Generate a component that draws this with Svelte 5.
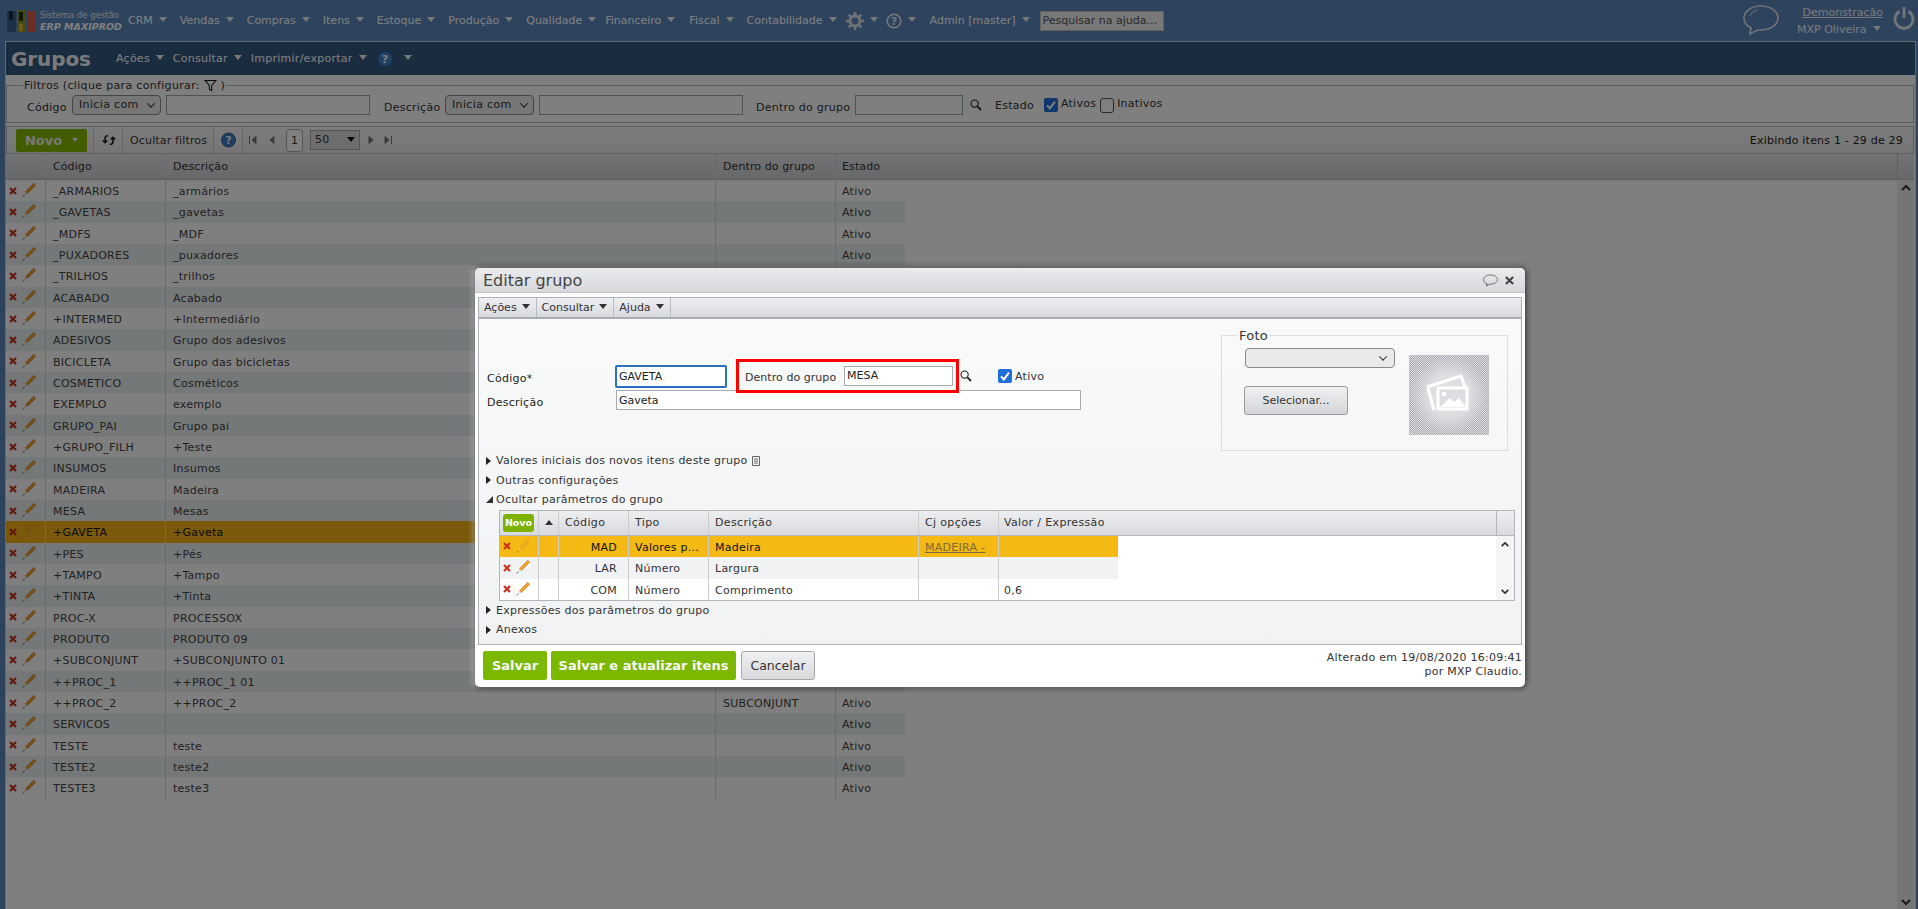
<script>
  const menu = ['CRM','Vendas','Compras','Itens','Estoque','Produção','Qualidade','Financeiro','Fiscal','Contabilidade'];
  const rows = [
    ['_ARMARIOS','_armários','','Ativo'],['_GAVETAS','_gavetas','','Ativo'],['_MDFS','_MDF','','Ativo'],['_PUXADORES','_puxadores','','Ativo'],
    ['_TRILHOS','_trilhos','','Ativo'],['ACABADO','Acabado','','Ativo'],['+INTERMED','+Intermediário','','Ativo'],['ADESIVOS','Grupo dos adesivos','','Ativo'],
    ['BICICLETA','Grupo das bicicletas','','Ativo'],['COSMETICO','Cosméticos','','Ativo'],['EXEMPLO','exemplo','','Ativo'],['GRUPO_PAI','Grupo pai','','Ativo'],
    ['+GRUPO_FILH','+Teste','','Ativo'],['INSUMOS','Insumos','','Ativo'],['MADEIRA','Madeira','','Ativo'],['MESA','Mesas','','Ativo'],
    ['+GAVETA','+Gaveta','','Ativo'],['+PES','+Pés','','Ativo'],['+TAMPO','+Tampo','','Ativo'],['+TINTA','+Tinta','','Ativo'],
    ['PROC-X','PROCESSOX','','Ativo'],['PRODUTO','PRODUTO 09','','Ativo'],['+SUBCONJUNT','+SUBCONJUNTO 01','','Ativo'],['++PROC_1','++PROC_1 01','','Ativo'],
    ['++PROC_2','++PROC_2','SUBCONJUNT','Ativo'],['SERVICOS','','','Ativo'],['TESTE','teste','','Ativo'],['TESTE2','teste2','','Ativo'],['TESTE3','teste3','','Ativo']
  ];
  const params = [
    ['MAD','Valores p...','Madeira','MADEIRA -',''],
    ['LAR','Número','Largura','',''],
    ['COM','Número','Comprimento','','0,6']
  ];
</script>

{#snippet caret()}<i class="caret"></i>{/snippet}
{#snippet xmark()}
  <svg class="xm" viewBox="0 0 8 8" width="8" height="8"><path d="M1 1 7 7M7 1 1 7" stroke="#c8321e" stroke-width="2.2"/></svg>
{/snippet}
{#snippet pencil(faded)}
  <svg class="pen" class:faded viewBox="0 0 14 14" width="15" height="15"><path d="M3.2 9 11 1.2 12.8 3 5 10.8Z" fill="#f0a22c" stroke="#c67a14" stroke-width=".6"/><path d="M3.2 9 2.4 11.6 5 10.8Z" fill="#f3d9a5"/><path d="M0.5 13.4 2.6 12" stroke="#444" stroke-width=".7"/></svg>
{/snippet}
{#snippet help(size)}
  <svg viewBox="0 0 16 16" width={size} height={size}><circle cx="8" cy="8" r="7.5" fill="#3f7fc4" stroke="#2a5f9c"/><text x="8" y="12" text-anchor="middle" font-size="11" font-weight="700" fill="#fff" font-family="DejaVu Sans">?</text></svg>
{/snippet}
{#snippet lens()}
  <svg viewBox="0 0 12 12" width="12" height="12"><circle cx="4.6" cy="4.6" r="3.6" fill="none" stroke="#222" stroke-width="1.1"/><path d="M7.4 7.4 11 11" stroke="#222" stroke-width="1.8"/></svg>
{/snippet}
{#snippet check()}
  <svg viewBox="0 0 14 14" width="14" height="14"><rect width="14" height="14" rx="2" fill="#1f6fd8"/><path d="M3 7.4 5.8 10.4 11 3.6" fill="none" stroke="#fff" stroke-width="2"/></svg>
{/snippet}
{#snippet tri(open)}
  <i class={open ? 'tri open' : 'tri'}></i>
{/snippet}

<div class="page">
  <header class="top">
    <svg class="logo" viewBox="0 0 30 24" width="30" height="24">
      <rect x="1" y="2" width="9" height="21" fill="#3a608a"/><rect x="11" y="1" width="8" height="22" fill="#8a9a2a"/><rect x="21" y="2" width="8" height="21" fill="#d85a4c"/>
      <rect x="3" y="2" width="4" height="9" fill="#1c2c40"/><rect x="13" y="3" width="4" height="9" fill="#222c10"/><rect x="13" y="15" width="4" height="7" fill="#e5b92f"/>
    </svg>
    <div class="brand"><span>Sistema de gestão</span><b>ERP MAXIPROD</b></div>
    <nav class="mainnav">
      {#each menu as m}<span class="mi">{m}{@render caret()}</span>{/each}
      <span class="mi ic">
        <svg viewBox="0 0 18 18" width="18" height="18"><circle cx="9" cy="9" r="5" fill="none" stroke="#e0e3e8" stroke-width="3"/><path d="M9 0v4M9 14v4M0 9h4M14 9h4M2.6 2.6l2.8 2.8M12.6 12.6l2.8 2.8M15.4 2.6l-2.8 2.8M5.4 12.6l-2.8 2.8" stroke="#e0e3e8" stroke-width="2.6"/></svg>
        {@render caret()}
      </span>
      <span class="mi ic">
        <svg viewBox="0 0 16 16" width="16" height="16"><circle cx="8" cy="8" r="6.8" fill="none" stroke="#f0f2f5" stroke-width="1.5"/><text x="8" y="11.8" text-anchor="middle" font-size="10.5" font-weight="700" fill="#f0f2f5" font-family="DejaVu Sans">?</text></svg>
        {@render caret()}
      </span>
      <span class="mi admin">Admin [master]{@render caret()}</span>
      <input class="search" placeholder="Pesquisar na ajuda..." />
    </nav>
    <div class="user">
      <svg class="bubble" viewBox="0 0 38 32" width="38" height="32"><path d="M19 2C9 2 2 7.500 2 14c0 4.500 3 8 7 10l-1 6 8-4.200c1 .2 2 .2 3 .2 10 0 17-5.500 17-12S29 2 19 2Z" fill="none" stroke="#dfe3e8" stroke-width="1.700"/><path d="M8 12c1-3 4-5 8-6" fill="none" stroke="#dfe3e8" stroke-width="1"/></svg>
      <div class="who"><u>Demonstração</u><span>MXP Oliveira{@render caret()}</span></div>
      <svg class="power" viewBox="0 0 22 24" width="22" height="24"><path d="M6.500 5.500A9 9 0 1 0 15.500 5.500" fill="none" stroke="#e8ebef" stroke-width="2.800"/><path d="M11 1v11" stroke="#e8ebef" stroke-width="2.800"/></svg>
    </div>
  </header>

  <main class="content">
    <div class="titlebar">
      <h1>Grupos</h1>
      <span class="tm">Ações{@render caret()}</span>
      <span class="tm">Consultar{@render caret()}</span>
      <span class="tm">Imprimir/exportar{@render caret()}</span>
      <span class="thelp">{@render help(16)}{@render caret()}</span>
    </div>

    <fieldset class="filters">
      <legend>Filtros (clique para configurar: <svg viewBox="0 0 14 14" width="13" height="13"><path d="M1 1.500h12L8.300 7v5.500L5.700 11V7Z" fill="none" stroke="#111" stroke-width="1.100"/></svg> )</legend>
      <div class="frow">
        <label class="l1" for="f1">Código</label>
        <span class="picker s1" id="f1">Inicia com<i class="chev"></i></span>
        <input class="fi i1" />
        <label class="l2" for="f2">Descrição</label>
        <span class="picker s1" id="f2">Inicia com<i class="chev"></i></span>
        <input class="fi i2" />
        <label class="l3" for="f3">Dentro do grupo</label>
        <input class="fi i3" id="f3" />
        <span class="flens">{@render lens()}</span>
        <span class="l4">Estado</span>
        {@render check()}
        <span class="ck">Ativos</span>
        <i class="uncheck"></i>
        <span class="ck">Inativos</span>
      </div>
    </fieldset>

    <div class="bar">
      <button class="novo">Novo<i class="caret small"></i></button>
      <span class="bs refresh">
        <svg viewBox="0 0 16 14" width="16" height="14"><path d="M1 7.500 3.500 10 6 7.500M3.500 9.500V5C3.500 3 5 2 7 2" fill="none" stroke="#111" stroke-width="1.700"/><path d="M15 6.500 12.500 4 10 6.500M12.500 4.500V9c0 2-1.500 3-3.500 3" fill="none" stroke="#111" stroke-width="1.700"/></svg>
      </span>
      <span class="bs hide">Ocultar filtros</span>
      <span class="bs bhelp">{@render help(16)}</span>
      <span class="pager">
        <svg viewBox="0 0 10 10" width="10" height="10"><path d="M1.500 1v8M8 1.500 4 5l4 3.500Z" fill="#777" stroke="#777"/></svg>
        <svg class="pv" viewBox="0 0 10 10" width="10" height="10"><path d="M7 1.500 3 5l4 3.500Z" fill="#777" stroke="#777"/></svg>
        <span class="pg">1</span>
        <span class="pz">50<i class="dn"></i></span>
        <svg viewBox="0 0 10 10" width="10" height="10"><path d="M3 1.500 7 5 3 8.500Z" fill="#777" stroke="#777"/></svg>
        <svg class="pl" viewBox="0 0 10 10" width="10" height="10"><path d="M8.500 1v8M2 1.500 6 5 2 8.500Z" fill="#777" stroke="#777"/></svg>
      </span>
      <span class="count">Exibindo itens 1 - 29 de 29</span>
    </div>

    <div class="thead">
      <span class="c0"></span><span class="c1">Código</span><span class="c2">Descrição</span><span class="c3">Dentro do grupo</span><span class="c4">Estado</span><span class="cfill"></span><span class="cs"></span>
    </div>
    <div class="tbody">
      <div class="rows">
        {#each rows as r, i}
          <div class="row" class:alt={i % 2 === 1} class:cur={i === 16}>
            <span class="c0">{@render xmark()}{@render pencil(i === 16)}</span>
            <span class="c1 tx">{r[0]}</span><span class="c2 tx">{r[1]}</span><span class="c3 tx">{r[2]}</span><span class="c4 tx">{r[3]}</span>
          </div>
        {/each}
      </div>
      <div class="vscroll">
        <svg viewBox="0 0 12 8" width="12" height="8"><path d="M2 6 6 2l4 4" fill="none" stroke="#333" stroke-width="2"/></svg>
        <svg viewBox="0 0 12 8" width="12" height="8"><path d="M2 2l4 4 4-4" fill="none" stroke="#333" stroke-width="2"/></svg>
      </div>
    </div>
  </main>

  <div class="shade"></div>

  <div class="dialog">
    <div class="dtitle">
      <span>Editar grupo</span>
      <svg viewBox="0 0 18 14" width="17" height="13"><path d="M9 1C5 1 1.500 3 1.500 6S4 10 5.500 10.500L4.500 13l4-2.200C13 11 16.500 9 16.500 6S13 1 9 1Z" fill="none" stroke="#666" stroke-width="1"/></svg>
      <svg class="dx" viewBox="0 0 10 10" width="9" height="9"><path d="M1 1 9 9M9 1 1 9" stroke="#444" stroke-width="2.400"/></svg>
    </div>
    <div class="panel">
      <div class="dbar">
        <span>Ações{@render caret()}</span><span>Consultar{@render caret()}</span><span>Ajuda{@render caret()}</span>
      </div>
      <div class="form">
        <div class="fields">
          <div class="line one">
            <label for="cod">Código*</label>
            <input id="cod" class="gav" value="GAVETA" />
            <div class="redbox"><label for="mesa">Dentro do grupo</label><input id="mesa" class="mesa" value="MESA" /></div>
            <span class="dlens">{@render lens()}</span>
            <span class="dck">{@render check()}<span>Ativo</span></span>
          </div>
          <div class="line two">
            <label for="desc">Descrição</label>
            <input id="desc" class="desc" value="Gaveta" />
          </div>
        </div>
        <fieldset class="foto">
          <legend>Foto</legend>
          <div class="fotogrid">
            <div class="fotoleft">
              <span class="fsel"><i class="chev"></i></span>
              <button class="selbtn">Selecionar...</button>
            </div>
            <div class="thumb">
              <svg viewBox="0 0 80 80" width="80" height="80">
                <path d="M18 31l34-11 5 14" fill="none" stroke="#fff" stroke-width="3" transform="translate(0 1)"/>
                <path d="M19 33l6 22" stroke="#fff" stroke-width="3"/>
                <rect x="29" y="33" width="29" height="21" fill="#dcdde0" stroke="#fff" stroke-width="3"/>
                <circle cx="35" cy="39" r="2.300" fill="#fff"/>
                <path d="M31 52 41 43l4 4 5-4 7 9Z" fill="#fff"/>
              </svg>
            </div>
          </div>
        </fieldset>
      </div>
      <div class="sec first">{@render tri(false)}Valores iniciais dos novos itens deste grupo <svg class="doc" viewBox="0 0 8 10" width="8" height="10"><path d="M.5.500h7v9h-7ZM2 3h4M2 5h4M2 7h4" fill="none" stroke="#666"/></svg></div>
      <div class="sec">{@render tri(false)}Outras configurações</div>
      <div class="sec">{@render tri(true)}Ocultar parâmetros do grupo</div>
      <div class="ptable">
        <div class="phead">
          <span class="p0"><button class="pnovo">Novo</button></span>
          <span class="p1"><i class="up"></i></span><span class="p2">Código</span><span class="p3">Tipo</span><span class="p4">Descrição</span><span class="p5">Cj opções</span><span class="p6">Valor / Expressão</span><span class="pfill"></span><span class="ps"></span>
        </div>
        <div class="pbody">
          <div class="prows">
            {#each params as p, i}
              <div class="prow" class:psel={i === 0} class:palt={i === 1}>
                <span class="p0">{@render xmark()}{@render pencil(i === 0)}</span>
                <span class="p1"></span><span class="p2 right tx">{p[0]}</span><span class="p3 tx">{p[1]}</span><span class="p4 tx">{p[2]}</span>
                <span class="p5 tx"><u>{p[3]}</u></span><span class="p6 tx">{p[4]}</span>
              </div>
            {/each}
          </div>
          <div class="pscroll">
            <svg viewBox="0 0 12 8" width="10" height="7"><path d="M2 6 6 2l4 4" fill="none" stroke="#333" stroke-width="2"/></svg>
            <svg viewBox="0 0 12 8" width="10" height="7"><path d="M2 2l4 4 4-4" fill="none" stroke="#333" stroke-width="2"/></svg>
          </div>
        </div>
      </div>
      <div class="sec s2">{@render tri(false)}Expressões dos parâmetros do grupo</div>
      <div class="sec s3">{@render tri(false)}Anexos</div>
    </div>
    <div class="dfoot">
      <button class="go w1">Salvar</button>
      <button class="go w2">Salvar e atualizar itens</button>
      <button class="cancel">Cancelar</button>
      <div class="alt-info">Alterado em 19/08/2020 16:09:41<br />por MXP Claudio.</div>
    </div>
  </div>
</div>

<style>
  :global(html), :global(body) { margin: 0; height: 100%; overflow: hidden; }
  :global(body) { font: 11px "DejaVu Sans", Verdana, sans-serif; letter-spacing: .25px; color: #333; background: #5c88bc; }
  * { box-sizing: border-box; }
  .page { width: 1918px; height: 909px; display: flex; flex-direction: column; overflow: hidden; background: #5c88bc; }
  input, button { font: inherit; margin: 0; }

  .top { height: 41px; flex: none; display: flex; align-items: center; padding-left: 6px; color: #fff; letter-spacing: 0; }
  .logo { flex: none; }
  .brand { display: flex; flex-direction: column; width: 88px; margin-left: 4px; line-height: 12px; }
  .brand span { font-size: 8.500px; color: #eef1f4; }
  .brand b { font-size: 9.500px; font-style: italic; color: #fff; }
  .mainnav { display: flex; align-items: center; height: 100%; }
  .mi { display: inline-flex; align-items: center; white-space: nowrap; margin-right: 13px; }
  .mi:nth-child(7) { margin-right: 9px; }
  .mi:nth-child(8) { margin-right: 14px; }
  .mi:nth-child(10) { margin-right: 9px; }
  .mi.ic { margin-right: 8px; }
  .mi.admin { margin-left: 6px; margin-right: 10px; }
  .caret { display: inline-block; width: 0; height: 0; border: 4px solid transparent; border-top: 5px solid #efefef; border-bottom: 0; margin-left: 6px; margin-top: -3px; vertical-align: middle; }
  .caret.small { border-width: 3px; border-top-width: 4px; border-bottom: 0; margin-left: 10px; margin-top: 0; }
  .search { width: 124px; height: 20px; border: 1px solid #c0c0c0; background: #f0f0f0; padding: 0 2px; color: #222; margin-left: 0; }
  .search::placeholder { color: #555; opacity: 1; }
  .user { margin-left: auto; display: flex; align-items: center; padding-right: 3px; }
  .bubble { margin-right: 17px; margin-top: -2px; }
  .who { display: flex; flex-direction: column; align-items: flex-end; width: 86px; line-height: 17px; color: #f2f4f6; }
  .who span { align-self: flex-start; white-space: nowrap; }
  .power { margin-left: 10px; margin-top: -5px; }

  .content { flex: 1; min-height: 0; margin: 0 2px 0 5px; background: #fff; border: 1px solid #d0d0d0; border-bottom: 0; display: flex; flex-direction: column; }
  .titlebar { height: 33px; flex: none; background: #35597e; color: #fff; display: flex; align-items: center; padding-left: 5px; }
  .titlebar h1 { margin: 0; font: 700 20px/1 "DejaVu Sans", sans-serif; width: 105px; color: #f6f6f6; letter-spacing: -.1px; }
  .tm { margin-right: 9px; display: inline-flex; align-items: center; white-space: nowrap; }
  .thelp { display: inline-flex; align-items: center; margin-left: 1px; }
  .thelp .caret { margin-left: 11px; }

  .filters { margin: 3px 1px 0 0; padding: 0; height: 45px; flex: none; border: 1px solid #bbb; min-width: 0; position: relative; }
  .filters legend { margin-left: 16px; padding: 0 1px; line-height: 15px; color: #333; white-space: nowrap; font-size: 11px; letter-spacing: .33px; }
  .filters legend svg { vertical-align: -3px; }
  .frow { display: flex; align-items: center; height: 20px; margin-top: 2px; padding-left: 20px; }
  .frow label, .l4 { white-space: nowrap; position: relative; top: 2px; }
  .l1 { width: 45px; }
  .l2 { margin-left: 14px; width: 61px; }
  .l3 { margin-left: 13px; width: 99px; }
  .l4 { margin-left: 10px; margin-right: 10px; top: 0 !important; }
  .picker { display: flex; align-items: center; justify-content: space-between; width: 89px; height: 20px; border: 1px solid #8a8a8a; border-radius: 4px; background: #eee; padding: 0 6px; margin-top: -1px; letter-spacing: .35px; }
  .s1 { flex: none; }
  .chev { display: inline-block; width: 6px; height: 6px; border-right: 1.500px solid #222; border-bottom: 1.500px solid #222; transform: rotate(45deg) translate(-1px,-1px); }
  .fi { height: 20px; border: 1px solid #9aa; background: #fff; padding: 0 2px; flex: none; }
  .i1 { width: 204px; margin-left: 5px; }
  .i2 { width: 204px; margin-left: 5px; }
  .i3 { width: 108px; }
  .flens { margin-left: 7px; width: 15px; display: flex; }
  .ck { margin: 0 3px; position: relative; top: -2px; }
  .uncheck { display: block; width: 14px; height: 15px; border: 1.500px solid #555; border-radius: 3px; background: #fff; margin-left: 1px; }

  .bar { height: 28px; flex: none; margin: 3px 1px 0 0; display: flex; align-items: center; border: 1px solid #bbb; background: linear-gradient(#f8f8f8,#ebebeb); padding-left: 9px; }
  .novo { width: 71px; height: 23px; background: #84bb00; color: #f0f0f0; border: 0; border-radius: 2px; font: 700 13px "DejaVu Sans", sans-serif; padding: 0; display: flex; align-items: center; justify-content: center; }
  .bs { height: 100%; display: flex; align-items: center; border-left: 1px solid #ccc; }
  .refresh { margin-left: 6px; padding: 0 6px 0 8px; width: 29px; }
  .hide { padding: 0 6px 0 7px; width: 91px; white-space: nowrap; letter-spacing: .15px; }
  .bhelp { padding: 0 6px 0 7px; width: 30px; border-right: 1px solid #ccc; }
  .pager { display: flex; align-items: center; margin-left: 5px; gap: 0; }
  .pv { margin-left: 9px; margin-right: 9px; }
  .pg { width: 17px; height: 23px; border: 1px solid #aaa; border-radius: 4px; background: #fff; text-align: center; line-height: 22px; margin-right: 7px; }
  .pz { width: 50px; height: 20px; background: #ddd; border: 1px solid #aaa; padding-left: 4px; display: flex; align-items: center; justify-content: space-between; padding-right: 4px; margin-right: 6px; margin-top: -1px; }
  .dn { border: 4px solid transparent; border-top: 5px solid #111; border-bottom: 0; }
  .pl { margin-left: 7px; }
  .count { margin-left: auto; padding-right: 10px; color: #222; letter-spacing: .2px; }

  .thead { height: 26px; flex: none; margin-right: 1px; display: flex; align-items: center; background: linear-gradient(#e6e7ea,#d0d1d4); border-bottom: 1px solid #bbb; color: #333; letter-spacing: .1px; }
  .thead span { height: 100%; display: flex; align-items: center; }
  .c0 { width: 39px; flex: none; display: flex; align-items: center; padding-left: 3px; }
  .c1 { width: 120px; flex: none; padding-left: 7px; border-left: 1px solid #d4d4d4; white-space: nowrap; }
  .c2 { width: 550px; flex: none; padding-left: 7px; border-left: 1px solid #d4d4d4; white-space: nowrap; }
  .c3 { width: 120px; flex: none; padding-left: 7px; border-left: 1px solid #d4d4d4; white-space: nowrap; }
  .c4 { width: 70px; flex: none; padding-left: 6px; border-left: 1px solid #d4d4d4; white-space: nowrap; }
  .cfill { flex: 1; border-left: 0; }
  .cs { width: 17px; flex: none; border-left: 1px solid #bbb; }

  .tbody { flex: 1; min-height: 0; display: flex; justify-content: space-between; margin-right: 1px; }
  .rows { width: 899px; }
  .row { height: 21.330px; display: flex; align-items: center; background: #fff; color: #444; }
  .row.alt { background: #eaf0f0; }
  .row.cur { background: #f5b414; color: #111; }
  .row span { height: 100%; display: flex; align-items: center; }
  .row .tx, .prow .tx { padding-top: 2px; }
  .xm { flex: none; }
  .pen { flex: none; margin-left: 5px; margin-top: -2px; }
  .pen.faded { opacity: .55; }
  .vscroll { width: 17px; background: #e8ecec; display: flex; flex-direction: column; justify-content: space-between; align-items: center; padding: 4px 0 3px; }

  .shade { position: absolute; inset: 0; background: rgba(0,0,0,.5); }

  .dialog { position: absolute; left: 475px; top: 268px; width: 1050px; height: 419px; background: #fff; border-radius: 5px; box-shadow: 3px 0 5px rgba(0,0,0,.25), 0 -3px 5px rgba(0,0,0,.2), 0 3px 4px rgba(0,0,0,.25), -3px 0 4px rgba(255,255,255,.35); display: flex; flex-direction: column; padding: 0 3px; }
  .dtitle { height: 25px; margin: 0 -3px; flex: none; display: flex; align-items: center; padding: 0 11px 0 8px; border-radius: 5px 5px 0 0; background: linear-gradient(#ebecee,#d6d7da); border-bottom: 1px solid #c4c6ca; }
  .dtitle span { font-size: 16px; color: #444; flex: 1; letter-spacing: 0; }
  .dx { margin-left: 6px; }
  .panel { margin-top: 4px; height: 348px; flex: none; border: 1px solid #aeb2b8; background: linear-gradient(#f9fbfa,#f1f2f4); display: flex; flex-direction: column; }
  .dbar { height: 21px; flex: none; display: flex; background: linear-gradient(#eeeff1,#d9dade); border-bottom: 2px solid #a9adb3; color: #333; letter-spacing: 0; }
  .dbar span { display: flex; align-items: center; padding: 0 6px 0 5px; border-right: 1px solid #b8bbc0; white-space: nowrap; }
  .dbar .caret { border-top-color: #333; margin-left: 5px; }

  .form { height: 132px; flex: none; display: flex; justify-content: space-between; }
  .fields { padding: 40px 0 0 8px; flex: 1; }
  .line { display: flex; align-items: center; position: relative; }
  .line > label { width: 128px; flex: none; color: #222; }
  .one { height: 34px; z-index: 1; }
  .one > label { margin-top: 4px; }
  .gav { width: 112px; height: 23px; flex: none; border: 2px solid #2a6fc0; border-radius: 2px; background: #fff; padding: 0 2px; margin-left: 0; margin-top: 0; color: #222; outline: 0; }
  .redbox { margin-left: 9px; width: 223px; height: 34px; flex: none; border: 3px solid #f00; display: flex; align-items: center; padding-left: 6px; letter-spacing: .05px; }
  .redbox label { width: 99px; flex: none; margin-top: 2px; }
  .mesa { width: 109px; height: 20px; flex: none; border: 1px solid #aaa; padding: 0 2px; margin-top: -1px; color: #222; background: #fff; }
  .dlens { width: 39px; display: flex; padding-left: 1px; margin-top: 0; }
  .dck { display: inline-flex; align-items: center; gap: 3px; margin-top: 0; }
  .two { margin-top: -3px; height: 20px; }
  .two > label { margin-top: 4px; }
  .desc { width: 465px; height: 20px; flex: none; border: 1px solid #aaa; padding: 0 2px; margin-left: 1px; color: #222; background: #fff; }

  .foto { margin: 10px 13px 0 0; padding: 0; width: 287px; height: 122px; flex: none; border: 1px solid #ddd; min-width: 0; }
  .foto legend { margin-left: 15px; padding: 0 2px; font-size: 13px; line-height: 13px; color: #333; }
  .fotogrid { display: flex; padding-left: 22px; }
  .fotoleft { width: 165px; display: flex; flex-direction: column; align-items: flex-start; margin-top: 6px; }
  .fsel { display: flex; align-items: center; justify-content: flex-end; width: 150px; height: 20px; border: 1px solid #888; border-radius: 4px; background: #e9eaec; padding-right: 8px; margin-left: 1px; }
  .selbtn { margin-top: 18px; width: 104px; height: 29px; border: 1px solid #999; border-radius: 3px; background: linear-gradient(#eff0f2,#d4d5d8); color: #333; padding: 0; }
  .thumb { width: 80px; height: 80px; margin-top: 13px; background: radial-gradient(circle,#e2e3e5 0,#dcdde0 38%,rgba(220,221,224,0) 68%), repeating-conic-gradient(#a9abb1 0 25%,#dcdde0 0 50%) 0 0/2px 2px; }
  .thumb svg { display: block; }

  .sec { height: 19.500px; flex: none; display: flex; align-items: center; padding-left: 7px; color: #333; white-space: nowrap; }
  .tri { display: inline-block; width: 0; height: 0; border: 4px solid transparent; border-left: 5px solid #222; border-right: 0; margin-right: 5px; }
  .tri.open { border: 0; border-left: 7px solid transparent; border-bottom: 7px solid #333; margin-right: 3px; }
  .doc { margin-left: 5px; }

  .ptable { margin: 0 6px 0 20px; height: 91px; flex: none; border: 1px solid #b2b5ba; background: #fff; display: flex; flex-direction: column; }
  .phead { height: 25px; flex: none; display: flex; background: linear-gradient(#eeeff1,#d8d9dc); border-bottom: 1px solid #b2b5ba; color: #333; letter-spacing: .35px; }
  .phead span { display: flex; align-items: center; }
  .p0 { width: 38px; flex: none; display: flex; align-items: center; padding-left: 3px; }
  .p1 { width: 20px; flex: none; border-left: 1px solid #ccc; display: flex; align-items: center; }
  .p2 { width: 70px; flex: none; border-left: 1px solid #ccc; padding-left: 6px; }
  .p3 { width: 80px; flex: none; border-left: 1px solid #ccc; padding-left: 6px; white-space: nowrap; }
  .p4 { width: 210px; flex: none; border-left: 1px solid #ccc; padding-left: 6px; }
  .p5 { width: 80px; flex: none; border-left: 1px solid #ccc; padding-left: 6px; white-space: nowrap; }
  .p6 { width: 120px; flex: none; border-left: 1px solid #ccc; padding-left: 5px; white-space: nowrap; }
  .pfill { flex: 1; }
  .ps { width: 18px; flex: none; border-left: 1px solid #b2b5ba; }
  .pnovo { width: 31px; height: 18px; background: #7db300; color: #fff; border: 0; border-radius: 3px; font: 700 9.500px "DejaVu Sans", sans-serif; padding: 0; margin-left: 0; }
  .up { display: block; width: 0; height: 0; border: 4px solid transparent; border-bottom: 5px solid #333; border-top: 0; margin-left: 6px; }
  .pbody { flex: 1; display: flex; justify-content: space-between; min-height: 0; }
  .prows { width: 618px; }
  .prow { height: 21.500px; display: flex; color: #333; background: #fff; }
  .prow span { display: flex; align-items: center; height: 100%; }
  .prow .right { justify-content: flex-end; padding-right: 11px; }
  .prow.psel { background: #f5b914; color: #111; }
  .prow.palt { background: #f1f2f3; }
  .psel u { color: #7a6a3a; }
  .pscroll { width: 18px; background: #f4f5f5; display: flex; flex-direction: column; justify-content: space-between; align-items: center; padding: 5px 0; }

  .dfoot { flex: 1; display: flex; align-items: flex-start; padding: 6px 0 0 5px; gap: 4px; position: relative; }
  .go { height: 29px; border: 0; border-radius: 2px; background: #7db800; color: #f6f6f6; font: 700 13px "DejaVu Sans", sans-serif; padding: 0; }
  .w1 { width: 64px; }
  .w2 { width: 185px; }
  .cancel { height: 29px; width: 74px; border: 1px solid #a4a6aa; border-radius: 3px; background: linear-gradient(#eff0f2,#d9dadc); color: #333; font-size: 12.500px; padding: 0; margin-left: 1px; }
  .alt-info { margin-left: auto; text-align: right; line-height: 14px; color: #333; }
</style>
